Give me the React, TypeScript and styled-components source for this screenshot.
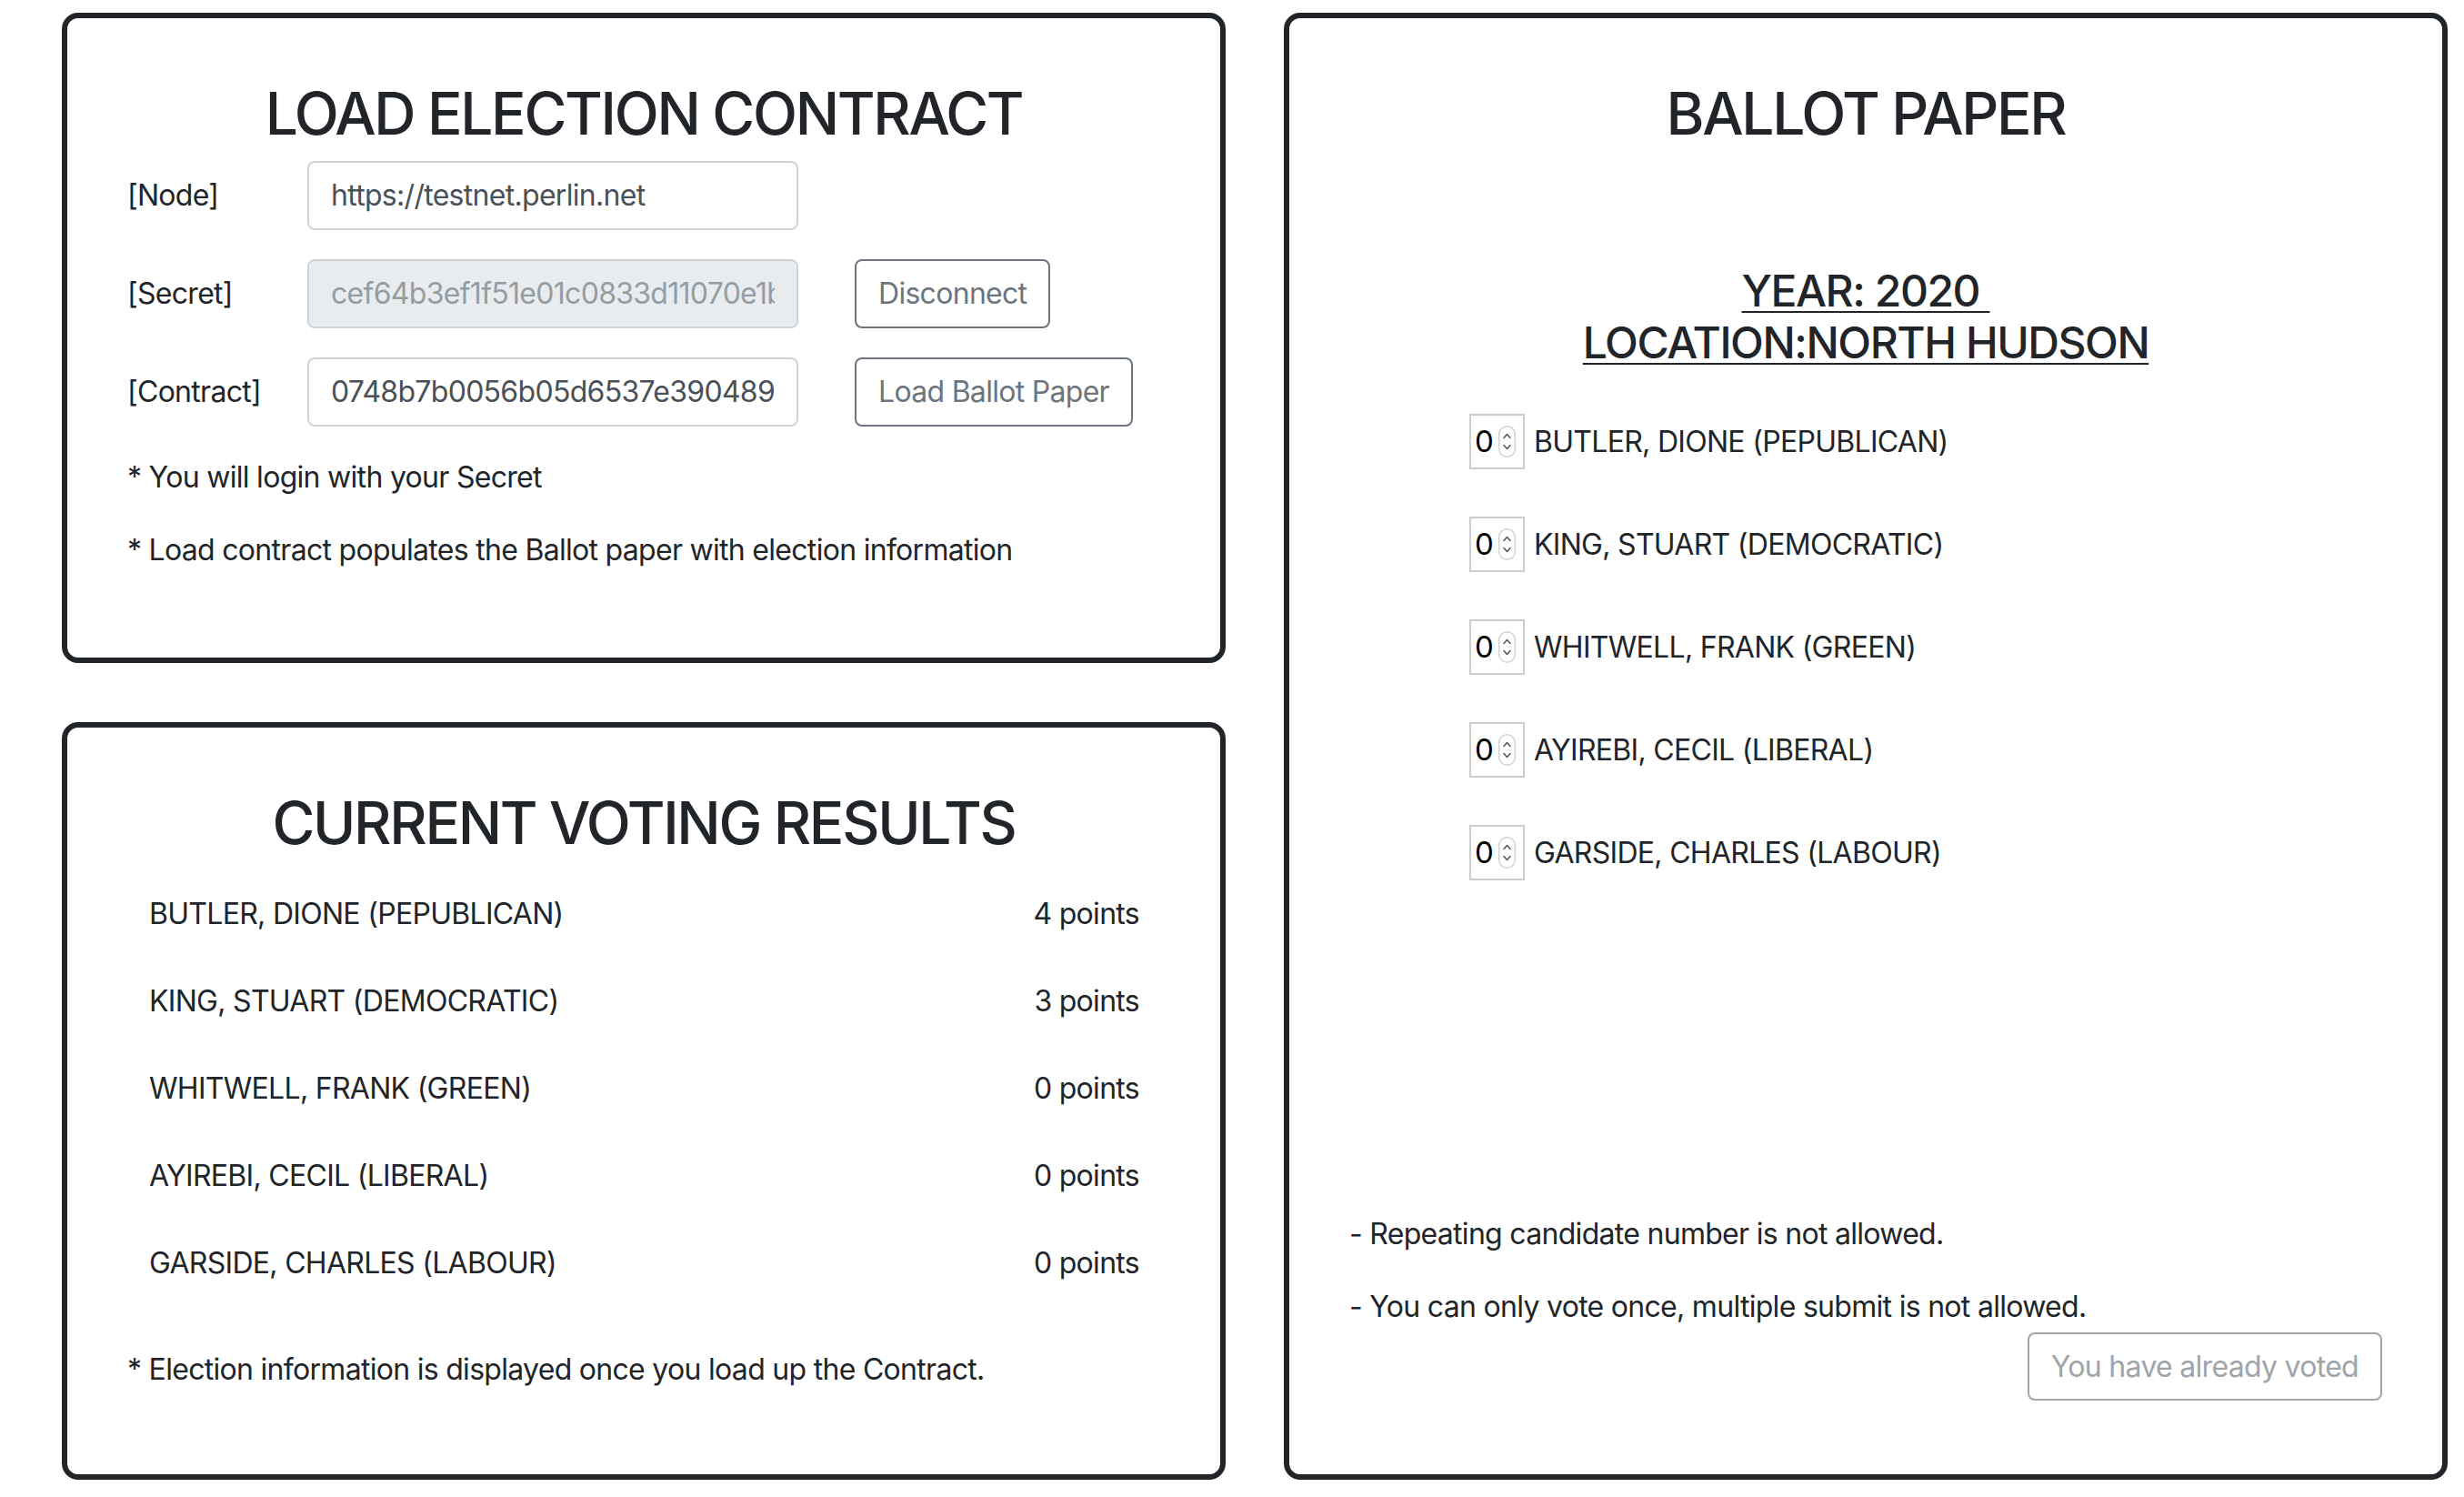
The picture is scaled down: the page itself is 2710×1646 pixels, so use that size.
import React from 'react';
import styled, { createGlobalStyle } from 'styled-components';

const GlobalStyle = createGlobalStyle`
  html, body { margin: 0; padding: 0; background: #ffffff; }
  body {
    font-family: Inter, "Noto Sans", "Liberation Sans", sans-serif;
    color: #212529;
    font-size: 32px;
    line-height: 1.5;
    letter-spacing: -0.022em;
  }
  * { box-sizing: border-box; }
`;

const Page = styled.div`
  display: grid;
  grid-template-columns: 1280px 1280px;
  column-gap: 64px;
  padding: 14px 0 0 68px;
  align-items: start;
`;

const LeftColumn = styled.div`
  display: flex;
  flex-direction: column;
  gap: 65px;
`;

const Panel = styled.section<{ $height: number; $bottom?: number }>`
  height: ${(p) => p.$height}px;
  border: 6px solid #212529;
  border-radius: 18px;
  padding: 67px 66px ${(p) => p.$bottom ?? 78}px;
  display: flex;
  flex-direction: column;
`;

const Title = styled.h2`
  margin: 0 0 13px;
  font-size: 64px;
  font-weight: 500;
  line-height: 1.2;
  letter-spacing: -0.036em;
  text-align: center;
`;

const FormGrid = styled.div`
  display: grid;
  grid-template-columns: 198px 540px auto;
  row-gap: 32px;
  align-items: center;
  justify-items: start;
`;

const Label = styled.label`
  font-size: 32px;
  line-height: 48px;
`;

const TextInput = styled.input`
  width: 540px;
  height: 76px;
  padding: 12px 24px;
  font-family: inherit;
  font-size: 32px;
  line-height: 48px;
  letter-spacing: -0.022em;
  color: #495057;
  background: #ffffff;
  border: 2px solid #ced4da;
  border-radius: 8px;
  outline: none;
  &:disabled {
    background: #e9ecef;
    color: #959ca2;
    -webkit-text-fill-color: #959ca2;
    opacity: 1;
  }
`;

const OutlineButton = styled.button<{ $offset?: number }>`
  margin-left: ${(p) => p.$offset ?? 0}px;
  height: 76px;
  padding: 12px 24px;
  font-family: inherit;
  font-size: 32px;
  line-height: 48px;
  letter-spacing: -0.022em;
  color: #6c757d;
  background: transparent;
  border: 2px solid #6c757d;
  border-radius: 8px;
  white-space: nowrap;
  cursor: pointer;
  &:disabled {
    opacity: 0.65;
    cursor: default;
  }
`;

const Note = styled.p<{ $gap?: number }>`
  margin: 0 0 ${(p) => p.$gap ?? 32}px;
  font-size: 32px;
  line-height: 48px;
`;

const Notes = styled.div<{ $top: number; $auto?: boolean }>`
  margin-top: ${(p) => (p.$auto ? 'auto' : `${p.$top}px`)};
  display: flex;
  flex-direction: column;
`;

const ResultList = styled.ul`
  list-style: none;
  margin: 0;
  padding: 0;
`;

const ResultRow = styled.li`
  display: flex;
  justify-content: space-between;
  padding: 24px 23px 24px 24px;
  line-height: 48px;
`;

const Footnote = styled.p`
  margin: 45px 0 0;
  line-height: 48px;
`;

const ElectionInfo = styled.h4`
  margin: 114px 0 50px;
  font-size: 48px;
  font-weight: 500;
  line-height: 1.19;
  letter-spacing: -0.03em;
  text-align: center;
  text-decoration: underline;
  text-decoration-thickness: 2px;
  text-underline-offset: 5px;
`;

const BallotList = styled.div`
  display: flex;
  flex-direction: column;
  gap: 52px;
  padding-left: 132px;
`;

const BallotRow = styled.div`
  display: flex;
  align-items: center;
  height: 61px;
`;

const NumberBox = styled.div`
  width: 61px;
  height: 61px;
  border: 2px solid #cccccc;
  display: flex;
  align-items: center;
  padding-left: 4px;
  gap: 5px;
  font-size: 33px;
  line-height: 1;
  letter-spacing: 0;
  color: #000000;
  flex-shrink: 0;
`;

const CandidateName = styled.span`
  margin-left: 10px;
  line-height: 48px;
`;

const VotedButton = styled(OutlineButton)`
  align-self: flex-end;
  margin-top: 4px;
  height: 75px;
`;

const Spinner = () => (
  <svg width="19" height="35" viewBox="0 0 19 35" aria-hidden="true">
    <rect x="0.75" y="0.75" width="17.5" height="33.5" rx="8.75" fill="#ffffff" stroke="#d2d2d2" strokeWidth="1.5" />
    <path d="M6 13.5 L9.5 9.5 L13 13.5" fill="none" stroke="#5a5a5a" strokeWidth="1.6" strokeLinecap="round" strokeLinejoin="round" />
    <path d="M6 21.5 L9.5 25.5 L13 21.5" fill="none" stroke="#5a5a5a" strokeWidth="1.6" strokeLinecap="round" strokeLinejoin="round" />
  </svg>
);

const candidates = [
  { name: 'BUTLER, DIONE (PEPUBLICAN)', points: 4 },
  { name: 'KING, STUART (DEMOCRATIC)', points: 3 },
  { name: 'WHITWELL, FRANK (GREEN)', points: 0 },
  { name: 'AYIREBI, CECIL (LIBERAL)', points: 0 },
  { name: 'GARSIDE, CHARLES (LABOUR)', points: 0 },
];

export default function App() {
  return (
    <>
      <GlobalStyle />
      <Page>
        <LeftColumn>
          <Panel $height={715}>
            <Title>LOAD ELECTION CONTRACT</Title>
            <FormGrid>
              <Label>[Node]</Label>
              <TextInput readOnly value="https://testnet.perlin.net" />
              <span />
              <Label>[Secret]</Label>
              <TextInput disabled value="cef64b3ef1f51e01c0833d11070e1b6f2d8a4c6e" />
              <OutlineButton $offset={62}>Disconnect</OutlineButton>
              <Label>[Contract]</Label>
              <TextInput readOnly value="0748b7b0056b05d6537e390489b3c5f1e2a6d8c0" />
              <OutlineButton $offset={62}>Load Ballot Paper</OutlineButton>
            </FormGrid>
            <Notes $top={32}>
              <Note>* You will login with your Secret</Note>
              <Note>* Load contract populates the Ballot paper with election information</Note>
            </Notes>
          </Panel>
          <Panel $height={833}>
            <Title>CURRENT VOTING RESULTS</Title>
            <ResultList>
              {candidates.map((c) => (
                <ResultRow key={c.name}>
                  <span>{c.name}</span>
                  <span>{c.points} points</span>
                </ResultRow>
              ))}
            </ResultList>
            <Footnote>* Election information is displayed once you load up the Contract.</Footnote>
          </Panel>
        </LeftColumn>
        <Panel $height={1613} $bottom={81}>
          <Title>BALLOT PAPER</Title>
          <ElectionInfo>
            YEAR: 2020&nbsp;
            <br />
            LOCATION:NORTH HUDSON
          </ElectionInfo>
          <BallotList>
            {candidates.map((c) => (
              <BallotRow key={c.name}>
                <NumberBox>
                  <span>0</span>
                  <Spinner />
                </NumberBox>
                <CandidateName>{c.name}</CandidateName>
              </BallotRow>
            ))}
          </BallotList>
          <Notes $top={0} $auto>
            <Note>- Repeating candidate number is not allowed.</Note>
            <Note $gap={0}>- You can only vote once, multiple submit is not allowed.</Note>
            <VotedButton disabled>You have already voted</VotedButton>
          </Notes>
        </Panel>
      </Page>
    </>
  );
}
